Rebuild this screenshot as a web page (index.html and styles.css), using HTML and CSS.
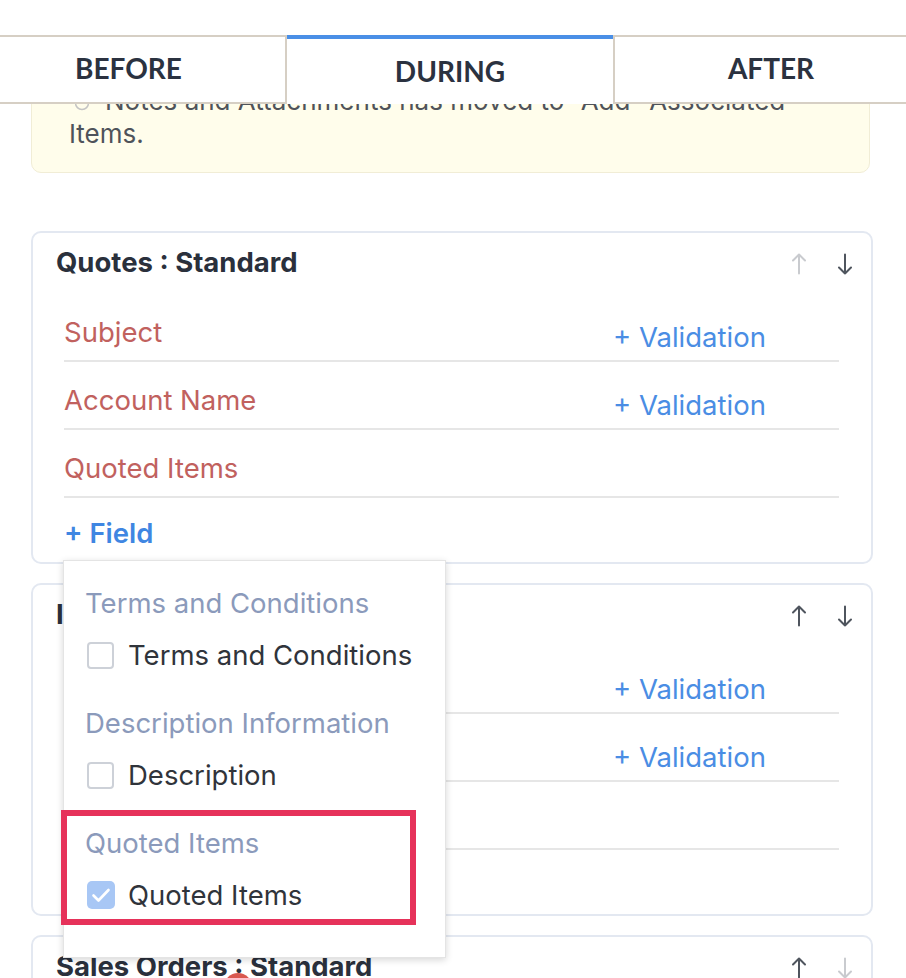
FILE: index.html
```html
<!DOCTYPE html>
<html lang="en">
<head>
<meta charset="utf-8">
<title>Layout Rules</title>
<link rel="stylesheet" href="styles.css">
</head>
<body>
<div class="page">
  <nav class="tabs">
    <div class="tab tab-before">BEFORE</div>
    <div class="tab tab-during">DURING</div>
    <div class="tab tab-after">AFTER</div>
  </nav>
  <main class="content">
    <div class="notice">
      <p class="notice-text"><svg class="notice-icon" width="16" height="16" viewBox="0 0 16 16"><circle cx="8" cy="8" r="6.5" fill="none" stroke="#c4c4c4" stroke-width="1.5"/></svg>Notes and Attachments has moved to “Add” Associated<br>Items.</p>
    </div>

    <section class="card">
      <header class="card-head">
        <h2 class="card-title">Quotes : Standard</h2>
        <div class="arrows">
          <svg class="arrow off" width="16" height="24" viewBox="0 0 16 24"><path d="M8 2.5v19M2 8.5 8 2.5l6 6"/></svg>
          <svg class="arrow" width="16" height="24" viewBox="0 0 16 24"><path d="M8 2.5v19M2 15.5l6 6 6-6"/></svg>
        </div>
      </header>
      <div class="row"><span class="label">Subject</span><span class="validation">+ Validation</span></div>
      <div class="row"><span class="label">Account Name</span><span class="validation">+ Validation</span></div>
      <div class="row"><span class="label">Quoted Items</span></div>
      <div class="field-add">
        <span class="add-link">+ Field</span>
        <div class="dropdown">
          <div class="dd-group">
            <div class="dd-head">Terms and Conditions</div>
            <label class="dd-item"><span class="box"></span>Terms and Conditions</label>
          </div>
          <div class="dd-group">
            <div class="dd-head">Description Information</div>
            <label class="dd-item"><span class="box"></span>Description</label>
          </div>
          <div class="dd-group">
            <div class="dd-head">Quoted Items</div>
            <label class="dd-item"><span class="box checked"><svg width="28" height="28" viewBox="0 0 28 28"><path d="M6.5 14.5l5 5 10-10.5" fill="none" stroke="#fff" stroke-width="2.6" stroke-linecap="round" stroke-linejoin="round"/></svg></span>Quoted Items</label>
          </div>
          <div class="highlight"></div>
        </div>
      </div>
    </section>

    <section class="card">
      <header class="card-head">
        <h2 class="card-title">Invoices : Standard</h2>
        <div class="arrows">
          <svg class="arrow" width="16" height="24" viewBox="0 0 16 24"><path d="M8 2.5v19M2 8.5 8 2.5l6 6"/></svg>
          <svg class="arrow" width="16" height="24" viewBox="0 0 16 24"><path d="M8 2.5v19M2 15.5l6 6 6-6"/></svg>
        </div>
      </header>
      <div class="row"><span class="label">Subject</span><span class="validation">+ Validation</span></div>
      <div class="row"><span class="label">Account Name</span><span class="validation">+ Validation</span></div>
      <div class="row"><span class="label">Invoiced Items</span></div>
      <div class="field-add"><span class="add-link">+ Field</span></div>
    </section>

    <section class="card card-last">
      <header class="card-head">
        <h2 class="card-title">Sales Orders : Standard</h2>
        <div class="arrows">
          <svg class="arrow" width="16" height="24" viewBox="0 0 16 24"><path d="M8 2.5v19M2 8.5 8 2.5l6 6"/></svg>
          <svg class="arrow off" width="16" height="24" viewBox="0 0 16 24"><path d="M8 2.5v19M2 15.5l6 6 6-6"/></svg>
        </div>
      </header>
      <span class="badge"></span>
      <div class="row"><span class="label">Subject</span><span class="validation">+ Validation</span></div>
      <div class="row"><span class="label">Account Name</span><span class="validation">+ Validation</span></div>
      <div class="row"><span class="label">Ordered Items</span></div>
    </section>
  </main>
</div>
</body>
</html>
```

FILE: styles.css
```css
* { box-sizing: border-box; }
html, body { margin: 0; padding: 0; overflow: hidden; background: #fff; }
body {
  width: 906px;
  font-family: Inter, "Noto Sans", sans-serif;
  color: #30343b;
}
.page { padding-top: 35px; }

/* tabs */
.tabs {
  display: grid;
  grid-template-columns: 317px 326px 316px;
  width: 959px;
  height: 69px;
  margin-left: -30px;
  position: relative;
  z-index: 3;
  background: #fff;
}
.tab {
  display: flex;
  align-items: center;
  justify-content: center;
  padding-bottom: 4px;
  font-family: Lato, "Liberation Sans", sans-serif;
  font-weight: 700;
  font-size: 28px;
  color: #2b3240;
  background: #fff;
}
.tab-before { border: 2px solid #d6cfc4; }
.tab-during { border-top: 4px solid #4a8fe6; padding-bottom: 2px; }
.tab-after { border: 2px solid #d6cfc4; }

/* content */
.content {
  padding: 0 33px 0 31px;
  background: linear-gradient(#e9e9e9, #f4f4f4) no-repeat 0 0 / 100% 12px;
}
.notice {
  position: relative;
  z-index: 1;
  margin: -43px 3px 58px 0;
  padding: 22px 20px 22px 37px;
  background: #fffdeb;
  border: 1px solid #f1edd6;
  border-radius: 10px;
}
.notice-text {
  margin: 0;
  font-size: 26px;
  line-height: 33px;
  color: #4f535a;
  white-space: nowrap;
}
.notice-icon {
  margin: 0 15px 0 5px;
  vertical-align: -1px;
}

/* cards */
.card {
  border: 2px solid #e3e8f1;
  border-radius: 10px;
  padding: 12px 32px 12px 23px;
  margin-bottom: 19px;
  font-size: 27.5px;
}
.card-last { position: relative; }
.card-head {
  display: flex;
  justify-content: space-between;
  align-items: center;
  height: 34px;
  margin: 0 -14px 15px 0;
}
.card-title {
  margin: 0;
  font-size: 27.5px;
  line-height: 34px;
  font-weight: 700;
  color: #2a303c;
  white-space: nowrap;
}
.arrows {
  display: flex;
  gap: 30px;
  align-items: center;
  margin-top: 3px;
}
.arrow path {
  fill: none;
  stroke: #4f555e;
  stroke-width: 2;
  stroke-linecap: round;
  stroke-linejoin: round;
}
.arrow.off path { stroke: #c9cbcf; }

.row {
  display: grid;
  grid-template-columns: 1fr 226px;
  align-items: start;
  margin-left: 8px;
  padding: 21px 0 11px;
  border-bottom: 2px solid #e6e6e6;
  line-height: 34px;
  height: 68px;
}
.label { color: #c1615e; white-space: nowrap; }
.validation { color: #4a8de4; margin: 5px 0 -5px; white-space: nowrap; }

.field-add {
  position: relative;
  margin-left: 8px;
  padding-top: 18px;
  line-height: 34px;
}
.add-link { color: #3f86e2; font-weight: 600; }

/* dropdown */
.dropdown {
  position: absolute;
  top: 62px;
  left: -1px;
  width: 383px;
  z-index: 5;
  background: #fff;
  border: 1px solid #e4e4e4;
  box-shadow: 0 2px 7px rgba(0, 0, 0, 0.16);
  padding: 25px 20px 45px 21px;
  font-size: 27.5px;
  line-height: 34px;
  white-space: nowrap;
}
.dd-group + .dd-group { margin-top: 34px; }
.dd-head { color: #8b9abb; }
.dd-item {
  display: flex;
  align-items: center;
  gap: 14px;
  margin-top: 18px;
  color: #30343b;
}
.box {
  width: 27px;
  height: 27px;
  margin-left: 2px;
  border: 2px solid #cdd1d8;
  border-radius: 4px;
  background: #fff;
  flex: none;
}
.box.checked {
  width: 28px;
  height: 28px;
  margin-right: -1px;
  border: none;
  border-radius: 5px;
  background: #a8c7f5;
}
.box.checked svg { display: block; }
.highlight {
  position: absolute;
  top: 249px;
  left: -3px;
  width: 355px;
  height: 115px;
  border: 6px solid #e6325a;
}

.badge {
  position: absolute;
  top: 36px;
  left: 191px;
  width: 28px;
  height: 28px;
  border-radius: 50%;
  background: #d9574f;
}
```
